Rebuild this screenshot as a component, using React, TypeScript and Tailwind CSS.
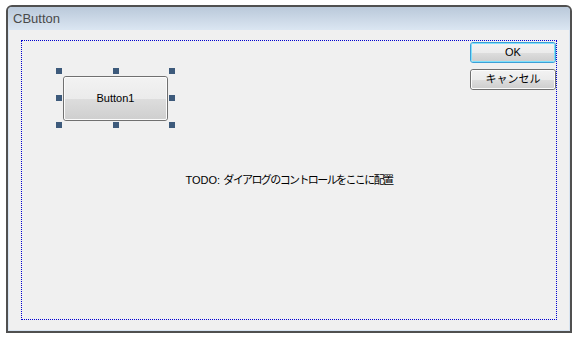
import React from "react";

const uiFont = {
  fontFamily: '"Liberation Sans", "Noto Sans CJK JP", sans-serif',
};

function Handle({ className }: { className: string }) {
  return <span className={`absolute h-[6px] w-[6px] bg-[#3d5a7b] ${className}`} />;
}

function WinButton({
  label,
  className = "",
  focused = false,
}: {
  label: string;
  className?: string;
  focused?: boolean;
}) {
  return (
    <div
      className={`relative flex items-center justify-center rounded-[3px] border ${
        focused ? "border-[#3c9fd6]" : "border-[#707070]"
      } ${className}`}
    >
      {/* two-tone gradient face */}
      <div
        className={`absolute inset-0 flex flex-col overflow-hidden rounded-[2px] border ${
          focused ? "border-[#7fe0fb]" : "border-[#fbfbfb]"
        }`}
      >
        <div className="flex-1 bg-gradient-to-b from-[#f2f2f2] to-[#ebebeb]" />
        <div className="flex-1 bg-gradient-to-b from-[#dddddd] to-[#cfcfcf]" />
      </div>
      <span className="relative text-[11px] leading-none text-black">{label}</span>
    </div>
  );
}

export default function App() {
  return (
    <div className="h-[341px] w-[579px] bg-white pl-[6px] pt-[5px]" style={uiFont}>
      {/* dialog frame */}
      <div className="flex h-[328px] w-[566px] flex-col overflow-hidden rounded-t-[6px] border-2 border-[#505050] bg-[#d8e4f1]">
        <div className="flex h-[23px] items-center bg-gradient-to-b from-[#bac9da] to-[#dbe6f2] pl-[5px]">
          <span className="text-[13px] text-[#4a4a4a]">CButton</span>
        </div>

        <div className="mx-px mb-px flex flex-1 bg-[#f0f0f0] px-[12px] py-[10px]">
          {/* dotted design-surface guide */}
          <div className="flex flex-1 flex-col border border-dotted border-[#0000d0]">
            <div className="flex items-start justify-between">
              <div className="relative ml-[41px] mt-[35px]">
                <WinButton label="Button1" className="h-[45px] w-[105px]" />
                <Handle className="left-[-7px] top-[-8px]" />
                <Handle className="left-[50px] top-[-8px]" />
                <Handle className="left-[106px] top-[-8px]" />
                <Handle className="left-[-7px] top-[19px]" />
                <Handle className="left-[106px] top-[19px]" />
                <Handle className="left-[-7px] top-[46px]" />
                <Handle className="left-[50px] top-[46px]" />
                <Handle className="left-[106px] top-[46px]" />
              </div>

              <div className="mt-px flex flex-col gap-[6px]">
                <WinButton label="OK" focused className="h-[21px] w-[86px]" />
                <WinButton label="キャンセル" className="h-[21px] w-[86px]" />
              </div>
            </div>

            <div className="mt-[51px] text-center text-[11px] text-black">
              TODO: <span className="tracking-[-1.6px]">ダイアログのコントロールをここに配置</span>
            </div>
          </div>
        </div>
      </div>
    </div>
  );
}
